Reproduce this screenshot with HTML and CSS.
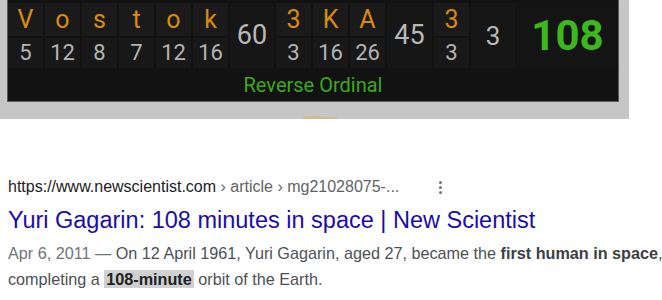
FILE: index.html
```html
<!DOCTYPE html>
<html>
<head>
<meta charset="utf-8">
<link rel="stylesheet" href="styles.css">
</head>
<body>
<div class="top">
  <div class="panel">
    <div class="grid">
      <div class="cell let">V</div>
      <div class="cell let">o</div>
      <div class="cell let">s</div>
      <div class="cell let">t</div>
      <div class="cell let">o</div>
      <div class="cell let">k</div>
      <div class="cell total span2">60</div>
      <div class="cell let">3</div>
      <div class="cell let">K</div>
      <div class="cell let">A</div>
      <div class="cell total span2">45</div>
      <div class="cell let">3</div>
      <div class="cell total span2 small">3</div>
      <div class="cell grand span2">108</div>

      <div class="cell num">5</div>
      <div class="cell num">12</div>
      <div class="cell num">8</div>
      <div class="cell num">7</div>
      <div class="cell num">12</div>
      <div class="cell num">16</div>
      <div class="cell num">3</div>
      <div class="cell num">16</div>
      <div class="cell num">26</div>
      <div class="cell num">3</div>
    </div>
    <div class="label">Reverse Ordinal</div>
  </div>
  <div class="strip"><div class="tan"></div></div>
</div>

<div class="result">
  <div class="url"><span class="domain">https://www.newscientist.com</span><span class="crumbs"> › article › mg21028075-...</span><span class="dots"><i></i><i></i><i></i></span></div>
  <div class="title">Yuri Gagarin: 108 minutes in space | New Scientist</div>
  <div class="snippet">
    <div class="line"><span class="date">Apr 6, 2011 — </span>On 12 April 1961, Yuri Gagarin, aged 27, became the <b>first human in space</b>,</div>
    <div class="line">completing a <b class="hl">108-minute</b> orbit of the Earth.</div>
  </div>
</div>
</body>
</html>
```

FILE: styles.css
```css
html, body {
  margin: 0;
  padding: 0;
  background: #ffffff;
  overflow: hidden;
}

body {
  width: 662px;
  height: 300px;
}

.top {
  width: 629px;
  height: 119px;
  background: #c6c6c6;
  padding-left: 7px;
  box-sizing: border-box;
  display: flex;
  flex-direction: column;
}

.panel {
  width: 612px;
  height: 102px;
  box-sizing: border-box;
  background: #121212;
  border: 1px solid #5a5a5a;
  border-top: none;
  padding-top: 3px;
  font-family: Roboto, "Liberation Sans", sans-serif;
}

.grid {
  display: grid;
  grid-template-columns: repeat(6, 35px) 44px repeat(3, 35px) 45px 35px 44px 1fr;
  grid-template-rows: 33px 30px;
  gap: 2px;
  grid-auto-flow: row dense;
}

.cell {
  background: #1a1a1a;
  display: flex;
  align-items: center;
  justify-content: center;
  line-height: 1;
}

.span2 {
  grid-row: span 2;
}

.let {
  color: #d98c0b;
  font-size: 25px;
}

.num {
  color: #b4b4b4;
  font-size: 22px;
  background: #181818;
}

.total {
  color: #b8b8b8;
  font-size: 27px;
  background: #161616;
}

.total.small {
  font-size: 26px;
}

.grand {
  color: #3cb81c;
  font-size: 42px;
  font-weight: 700;
  background: #141414;
}

.label {
  margin-top: 5px;
  text-align: center;
  color: #3aaa1a;
  font-size: 20px;
  line-height: 24px;
}

.strip {
  flex: 1;
  display: flex;
  align-items: flex-end;
  padding-left: 296px;
}

.tan {
  width: 34px;
  height: 3px;
  background: #d8b98b;
  clip-path: polygon(0 60%, 10% 0, 100% 40%, 100% 100%, 0 100%);
}

.result {
  padding-left: 8px;
  margin-top: 58px;
  font-family: Arial, "Liberation Sans", sans-serif;
}

.url {
  font-size: 16px;
  line-height: 20px;
  white-space: nowrap;
  display: flex;
  align-items: center;
}

.domain {
  color: #202124;
}

.crumbs {
  color: #5f6368;
  white-space: pre;
}

.dots {
  display: inline-flex;
  flex-direction: column;
  gap: 2px;
  margin-left: 40px;
}

.dots i {
  width: 3px;
  height: 3px;
  border-radius: 50%;
  background: #70757a;
}

.title {
  margin-top: 9px;
  font-size: 23.5px;
  line-height: 28px;
  color: #1a0dab;
  white-space: nowrap;
}

.snippet {
  margin-top: 6px;
  font-size: 16.2px;
  line-height: 26px;
  color: #4d5156;
}

.line {
  white-space: nowrap;
}

.date {
  color: #70757a;
}

.snippet b {
  color: #3c4043;
  font-weight: 700;
}

.snippet b.hl {
  background: #d0d0d0;
  padding: 0 2px;
  color: #202124;
}
```
